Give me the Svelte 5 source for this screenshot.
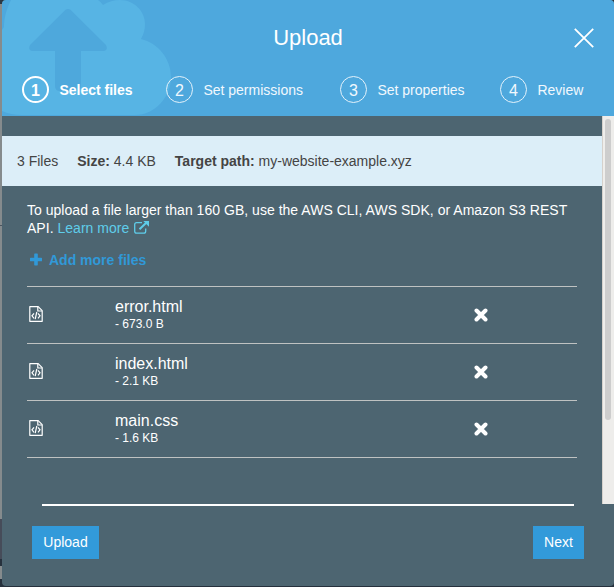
<script>
  const steps = [
    { n: 1, label: 'Select files', active: true },
    { n: 2, label: 'Set permissions' },
    { n: 3, label: 'Set properties' },
    { n: 4, label: 'Review' }
  ];
  const files = [
    { name: 'error.html', size: '673.0 B' },
    { name: 'index.html', size: '2.1 KB' },
    { name: 'main.css', size: '1.6 KB' }
  ];
</script>

<div class="page">
  <div class="modal">
    <header>
      <svg class="cloud" width="612" height="116" viewBox="2 0 612 116" aria-hidden="true">
        <path fill="#57b4e4" d="M2 30 L4 27 C4 17 7 8 11 0 H98 Q101 2 103 5 Q111 0 120 0 C134 0 145 11 145 24 Q145 32 141 39 C158 43 171 59 171 77 C171 97 155 115 135 115 H22 Q11 115 2 111Z" />
        <path fill="#4ea8dc" d="M65.5 9.8 Q68 8 70.5 9.8 L106 45 Q108.5 50 104 51 H81 V86 Q81 91 76 91 H60 Q55 91 55 86 V51 H32 Q27.500 50 30 45Z" />
      </svg>
      <div class="title">
        <h1>Upload</h1>
        <button class="close" aria-label="Close">
          <svg width="20" height="20" viewBox="0 0 20 20"><path d="M.8.8 19.200 19.200M19.200.8.8 19.200" stroke="#fff" stroke-width="1.8" /></svg>
        </button>
      </div>
      <nav>
        {#each steps as s}
          <div class="step s{s.n}" class:active={s.active}>
            <span class="num">{s.n}</span><span>{s.label}</span>
          </div>
        {/each}
      </nav>
    </header>

    <div class="body">
      <main>
        <div class="summary">
          <span>3 Files</span>
          <span><b>Size:</b> 4.4 KB</span>
          <span><b>Target path:</b> my-website-example.xyz</span>
        </div>
        <div class="content">
          <p>
            To upload a file larger than 160 GB, use the AWS CLI, AWS SDK, or Amazon S3 REST<br />API.
            <span class="link">Learn more
              <svg width="15" height="13" viewBox="0 0 15 13" fill="none" stroke="#5fcdea" stroke-width="1.3">
                <path d="M8 1.700H2.600Q.7 1.700.7 3.600V10.300Q.7 12.200 2.600 12.200H9.800Q11.700 12.200 11.700 10.300V7.500" />
                <path d="M5.500 8.200 12 2" stroke-width="2" />
                <path d="M9.300 0H15V5.700Z" fill="#5fcdea" stroke="none" />
              </svg></span>
          </p>
          <button class="add">
            <svg width="12" height="13" viewBox="0 0 12 12"><path d="M4.800 0H7.200Q7.800 0 7.800.7V4.200H11.300Q12 4.200 12 4.800V7.200Q12 7.800 11.300 7.800H7.800V11.300Q7.800 12 7.200 12H4.800Q4.200 12 4.200 11.300V7.800H.7Q0 7.800 0 7.200V4.800Q0 4.200.7 4.200H4.200V.7Q4.200 0 4.800 0Z" fill="#3199d8" /></svg>
            Add more files
          </button>
          <ul>
            {#each files as f}
              <li>
                <svg class="doc" width="14" height="16" viewBox="0 0 14 16" fill="none" stroke="#fff" stroke-width="1.2">
                  <path d="M.8.7H9.200L13.200 4.700V15.300H.8Z" stroke-linejoin="round" />
                  <path d="M8.800.8V5H13" />
                  <path d="M5 7.300 3 9.800 5 12.300M9 7.300 11 9.800 9 12.300M7.800 6 6.200 13.200" stroke-width="1.200" />
                </svg>
                <div class="file"><span class="name">{f.name}</span><span class="size">- {f.size}</span></div>
                <button class="remove" aria-label="Remove {f.name}">
                  <svg width="14" height="14" viewBox="0 0 14 14"><path d="M2.500 2.500 11.500 11.500M11.500 2.500 2.500 11.500" stroke="#fff" stroke-width="4" stroke-linecap="round" /></svg>
                </button>
              </li>
            {/each}
          </ul>
        </div>
      </main>
      <div class="scroll"><div class="thumb"></div></div>
    </div>

    <footer>
      <button class="btn upload">Upload</button>
      <button class="btn next">Next</button>
    </footer>
  </div>
</div>

<style>
  * { box-sizing: border-box; }
  .page {
    width: 614px; height: 587px; padding-left: 2px; overflow: hidden;
    font: 14px/18px "Liberation Sans", Arial, sans-serif; color: #fff;
    background:
      linear-gradient(#2b3844 4px, #858b8d 4px 225px, #4b5560 225px 226px, #858b8d 226px 519px, #464c59 519px 559px, #26313d 559px 566px, #858b8d 566px 579px, #26313d 579px) 0 0 / 2px 587px no-repeat,
      #26313d;
  }
  button { font: inherit; border: 0; padding: 0; background: none; color: inherit; }
  svg { display: block; flex: none; }
  .modal { width: 612px; height: 586px; background: #4d6571; border-radius: 4px; overflow: hidden; }
  header { position: relative; height: 116px; background: #4ea8dd; }
  .cloud { position: absolute; left: 0; top: 0; }
  .title { position: relative; height: 76px; display: flex; justify-content: center; }
  h1 { margin: 25px 0 0; font-size: 22px; line-height: 26px; font-weight: normal; }
  .close { position: absolute; right: 20px; top: 28px; }
  nav { position: relative; display: flex; padding-left: 20px; }
  .step { display: flex; align-items: center; gap: 10.400px; white-space: nowrap; color: #f1f8fd; }
  .s1 { width: 144px; }
  .s2 { width: 174px; }
  .s3 { width: 160px; }
  .num {
    width: 27px; height: 27px; border: 1px solid #e4f2fb; border-radius: 50%;
    display: flex; align-items: center; justify-content: center; font-size: 16px; padding-top: 2px;
  }
  .active { font-weight: bold; color: #fff; }
  .active .num { border: 2px solid #fff; }
  .body { display: flex; height: 388px; }
  main { width: 600px; padding-top: 20px; }
  .summary { height: 50px; background: #dceef8; color: #444; display: flex; align-items: center; padding-left: 15px; gap: 19px; }
  .content { padding: 15px 25px 0; }
  p { margin: 0; white-space: nowrap; letter-spacing: .025px; }
  .link { color: #5fcdea; }
  .link svg { display: inline-block; vertical-align: -1px; margin-left: 1px; }
  .add { display: flex; align-items: center; gap: 7px; margin: 14px 0 17px 3px; color: #3199d8; font-weight: bold; height: 18px; }
  .add svg { margin-top: -1px; }
  ul { list-style: none; margin: 0; padding: 0; border-top: 1px solid #bfc2c2; }
  li { height: 57px; border-bottom: 1px solid #bfc2c2; display: flex; align-items: center; padding: 0 89px 0 2px; }
  .doc { margin: -2px 72px 0 0; }
  .file { flex: 1; display: flex; flex-direction: column; padding-bottom: 2px; }
  .name { font-size: 16px; line-height: 19px; }
  .size { font-size: 12px; line-height: 16px; }
  .scroll { width: 12px; background: #eeedeb; border-left: 1px solid #d5d1cc; padding: 3px 0 0 2px; }
  .thumb { width: 6px; height: 301px; border-radius: 3px; background: #cdcdcd; }
  footer { display: flex; justify-content: space-between; margin: 0 40px; border-top: 2px solid #fff; height: 82px; padding-top: 20px; }
  .btn { height: 33px; background: #329ada; padding-bottom: 2px; }
  .upload { width: 67px; margin-left: -10px; }
  .next { width: 51px; margin-right: -10px; }
</style>
